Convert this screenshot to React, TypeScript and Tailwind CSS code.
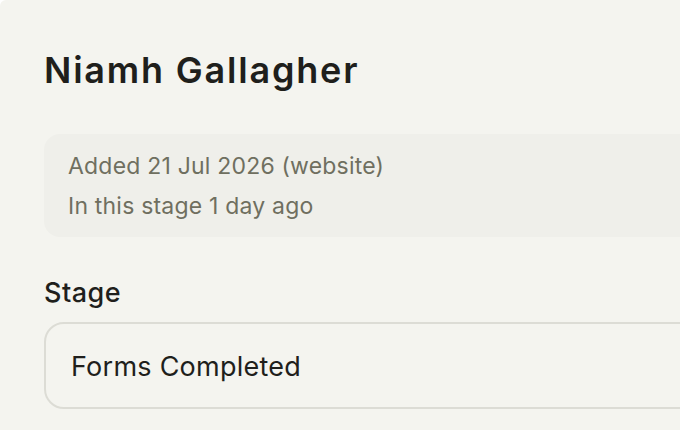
export default function App() {
  return (
    <div className="h-[430px] w-[680px] overflow-hidden rounded-tl-[6px] bg-[#f4f4ef] text-[#1f1f1c] [font-family:Inter,'Noto_Sans',sans-serif]">
      <div className="w-[760px] pl-[44px] pt-[44px]">
        <h1 className="text-[36px] leading-[52px] font-semibold tracking-[1.8px]">Niamh Gallagher</h1>

        <div className="mt-[38px] rounded-[16px] bg-[#efefea] px-[24px] pt-[12px] pb-[11px] text-[23px] leading-[40px] tracking-[0.2px] text-[#6f6f60]">
          <p>Added 21 Jul 2026 (website)</p>
          <p>In this stage 1 day ago</p>
        </div>

        <label className="mt-[38px] block text-[27px] leading-[36px] font-medium tracking-[0.5px]">Stage</label>

        <div className="mt-[11px] flex h-[87px] items-center rounded-[20px] border-2 border-[#dcdcd5] px-[25px] pt-[3px] text-[27px] tracking-[0.25px]">
          Forms Completed
        </div>
      </div>
    </div>
  );
}
